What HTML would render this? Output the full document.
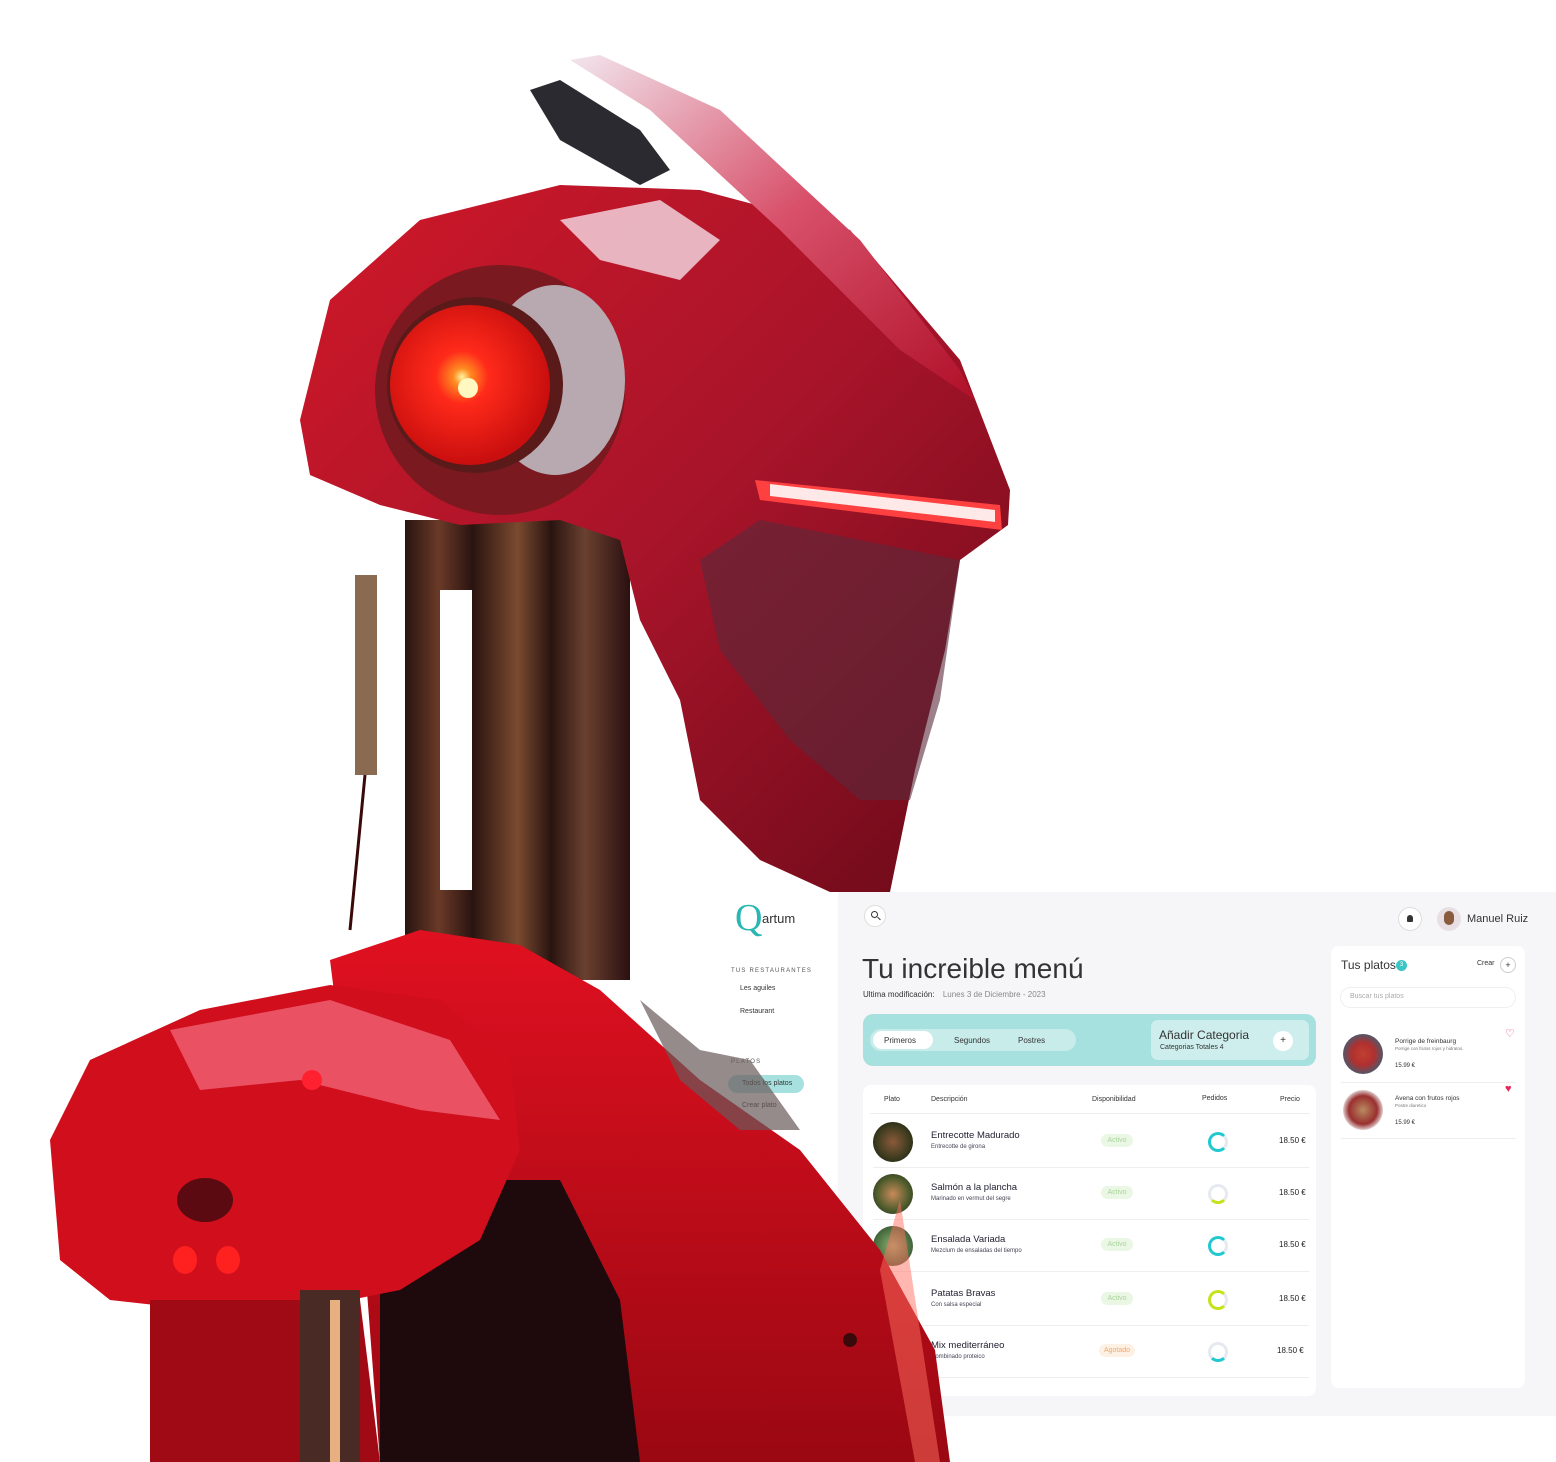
<!DOCTYPE html>
<html><head><meta charset="utf-8"><style>
*{margin:0;padding:0;box-sizing:border-box}
body{width:1556px;height:1462px;background:#fff;position:relative;overflow:hidden;font-family:"Liberation Sans",sans-serif;color:#333}
.a{position:absolute;white-space:nowrap}
.t{font-size:8px;color:#333}
.s{font-size:6px;color:#555}
.row{position:absolute;left:873px;width:436px;border-bottom:1px solid #eee;height:52px}
.dish{position:absolute;left:0;top:6px;width:40px;height:40px;border-radius:50%}
.badge{position:absolute;left:228px;top:18px;width:32px;height:13px;border-radius:7px;background:#eaf7e4;color:#a9d39a;font-size:7px;text-align:center;line-height:13px}
.ring{position:absolute;left:335px;top:16px;width:20px;height:20px;border-radius:50%;border:3px solid #e6e9ef}
.pr{position:absolute;left:406px;top:20px;font-size:8px;color:#222}
.nm{position:absolute;left:58px;top:14px;font-size:9.5px;color:#223}
.ds{position:absolute;left:58px;top:28px;font-size:6px;color:#445}
</style></head><body>
<div class="a" style="left:720px;top:892px;width:836px;height:524px;background:#f6f6f8"></div>
<div class="a" style="left:720px;top:892px;width:118px;height:524px;background:#fff"></div>
<div class="a" style="left:735px;top:896px;font-family:'Liberation Serif',serif;font-size:38px;color:#2ab7b3">Q</div>
<div class="a" style="left:762px;top:911px;font-size:13px;color:#333">artum</div>
<div class="a s" style="left:731px;top:968px;letter-spacing:1.2px">TUS RESTAURANTES</div>
<div class="a t" style="left:740px;top:985px;font-size:7px">Les aguiles</div>
<div class="a t" style="left:740px;top:1008px;font-size:7px">Restaurant</div>
<div class="a s" style="left:731px;top:1059px;letter-spacing:1.2px">PLATOS</div>
<div class="a" style="left:728px;top:1075px;width:76px;height:18px;border-radius:9px;background:#a7e1df"></div>
<div class="a t" style="left:742px;top:1080px;font-size:7px">Todos los platos</div>
<div class="a t" style="left:742px;top:1102px;font-size:7px">Crear plato</div>

<div class="a" style="left:864px;top:905px;width:22px;height:22px;border-radius:50%;border:1px solid #ddd;background:#fff"></div>
<div class="a" style="left:871px;top:911px;width:7px;height:7px;border-radius:50%;border:1px solid #333"></div>
<div class="a" style="left:877px;top:918px;width:4px;height:1px;background:#333;transform:rotate(45deg)"></div>
<div class="a" style="left:1398px;top:907px;width:24px;height:24px;border-radius:50%;border:1px solid #ddd;background:#fff"></div>
<div class="a" style="left:1407px;top:915px;width:6px;height:7px;background:#333;border-radius:3px 3px 1px 1px"></div>
<div class="a" style="left:1437px;top:907px;width:24px;height:24px;border-radius:50%;background:#e8dfe5"></div>
<div class="a" style="left:1444px;top:911px;width:10px;height:14px;border-radius:5px;background:#8a5a3c"></div>
<div class="a" style="left:1467px;top:913px;font-size:11px;color:#333">Manuel Ruiz</div>

<div class="a" style="left:862px;top:953px;font-size:28px;color:#333">Tu increible menú</div>
<div class="a t" style="left:863px;top:990px">Ultima modificación: <span style="color:#888;margin-left:6px">Lunes 3 de Diciembre - 2023</span></div>

<div class="a" style="left:863px;top:1014px;width:453px;height:52px;border-radius:10px;background:#a7e1df"></div>
<div class="a" style="left:870px;top:1029px;width:206px;height:22px;border-radius:11px;background:#c8ecea"></div>
<div class="a" style="left:873px;top:1031px;width:60px;height:18px;border-radius:9px;background:#fff"></div>
<div class="a t" style="left:884px;top:1036px">Primeros</div>
<div class="a t" style="left:954px;top:1036px">Segundos</div>
<div class="a t" style="left:1018px;top:1036px">Postres</div>
<div class="a" style="left:1151px;top:1020px;width:158px;height:40px;border-radius:7px;background:#cdeeec"></div>
<div class="a" style="left:1159px;top:1028px;font-size:12px;color:#333">Añadir Categoria</div>
<div class="a t" style="left:1160px;top:1044px;font-size:7px">Categorias Totales 4</div>
<div class="a" style="left:1273px;top:1031px;width:20px;height:20px;border-radius:50%;background:#fff;text-align:center;line-height:20px;font-size:10px">+</div>

<div class="a" style="left:863px;top:1085px;width:453px;height:311px;border-radius:8px;background:#fff"></div>
<div class="a t" style="left:884px;top:1096px;font-size:7px">Plato</div>
<div class="a t" style="left:931px;top:1096px;font-size:7px">Descripción</div>
<div class="a t" style="left:1092px;top:1096px;font-size:7px">Disponibilidad</div>
<div class="a t" style="left:1202px;top:1095px;font-size:7px">Pedidos</div>
<div class="a t" style="left:1280px;top:1096px;font-size:7px">Precio</div>
<div class="a" style="left:870px;top:1113px;width:440px;height:1px;background:#eee"></div>

<div class="row" style="top:1116px"><div class="dish" style="background:radial-gradient(#8a5a3a,#3b3a1e 60%,#111)"></div><div class="nm">Entrecotte Madurado</div><div class="ds">Entrecotte de girona</div><div class="badge">Activo</div><div class="ring" style="border-color:#20c9cf #e6e9ef #20c9cf #20c9cf"></div><div class="pr">18.50 €</div></div>
<div class="row" style="top:1168px"><div class="dish" style="background:radial-gradient(#c98a5a,#4a5a2a 60%,#222)"></div><div class="nm">Salmón a la plancha</div><div class="ds">Marinado en vermut del segre</div><div class="badge">Activo</div><div class="ring" style="border-bottom-color:#c6e21a"></div><div class="pr">18.50 €</div></div>
<div class="row" style="top:1220px"><div class="dish" style="background:radial-gradient(#8fb070,#4a7040 60%,#333)"></div><div class="nm">Ensalada Variada</div><div class="ds">Mezclum de ensaladas del tiempo</div><div class="badge">Activo</div><div class="ring" style="border-color:#20c9cf #e6e9ef #20c9cf #20c9cf"></div><div class="pr">18.50 €</div></div>
<div class="row" style="top:1274px"><div class="nm">Patatas Bravas</div><div class="ds">Con salsa especial</div><div class="badge">Activo</div><div class="ring" style="border-color:#c6e21a #e6e9ef #c6e21a #c6e21a"></div><div class="pr">18.50 €</div></div>
<div class="row" style="top:1326px"><div class="nm">Mix mediterráneo</div><div class="ds">Combinado proteico</div><div class="badge" style="background:#fdf0e4;color:#f4a86a;width:36px;left:226px">Agotado</div><div class="ring" style="border-bottom-color:#20c9cf"></div><div class="pr" style="left:404px">18.50 €</div></div>

<div class="a" style="left:1331px;top:946px;width:194px;height:442px;border-radius:8px;background:#fff"></div>
<div class="a" style="left:1341px;top:958px;font-size:12px;color:#333">Tus platos</div>
<div class="a" style="left:1396px;top:960px;width:11px;height:11px;border-radius:50%;background:#3cc6c3;color:#fff;font-size:6px;text-align:center;line-height:11px">3</div>
<div class="a t" style="left:1477px;top:960px;font-size:7px">Crear</div>
<div class="a" style="left:1500px;top:957px;width:16px;height:16px;border-radius:50%;border:1px solid #ccc;font-size:9px;text-align:center;line-height:14px">+</div>
<div class="a" style="left:1340px;top:987px;width:176px;height:21px;border-radius:11px;border:1px solid #eee"></div>
<div class="a" style="left:1350px;top:993px;font-size:7px;color:#aaa">Buscar tus platos</div>
<div class="a" style="left:1343px;top:1034px;width:40px;height:40px;border-radius:50%;background:radial-gradient(#c04030,#b03030 40%,#556 70%,#ddd)"></div>
<div class="a" style="left:1395px;top:1038px;font-size:6.5px;color:#333">Porrige de freinbaurg</div>
<div class="a" style="left:1395px;top:1046px;font-size:4.5px;color:#777">Porrige con frutos rojos y hidratos.</div>
<div class="a" style="left:1395px;top:1063px;font-size:6px">15.99 €</div>
<div class="a" style="left:1505px;top:1027px;font-size:11px;color:#e8457a">♡</div>
<div class="a" style="left:1341px;top:1082px;width:175px;height:1px;background:#eee"></div>
<div class="a" style="left:1343px;top:1090px;width:40px;height:40px;border-radius:50%;background:radial-gradient(#b88a60,#9a3030 50%,#eee 75%)"></div>
<div class="a" style="left:1395px;top:1095px;font-size:6.5px;color:#333">Avena con frutos rojos</div>
<div class="a" style="left:1395px;top:1103px;font-size:4.5px;color:#777">Postre diuretico</div>
<div class="a" style="left:1395px;top:1120px;font-size:6px">15.99 €</div>
<div class="a" style="left:1505px;top:1083px;font-size:11px;color:#e8245a">♥</div>
<div class="a" style="left:1341px;top:1138px;width:175px;height:1px;background:#eee"></div>

<svg class="a" style="left:0;top:0" width="1556" height="1462" viewBox="0 0 1556 1462">
<defs>
<radialGradient id="eye" cx="0.45" cy="0.45" r="0.55"><stop offset="0" stop-color="#fff6a0"/><stop offset="0.1" stop-color="#ff8a20"/><stop offset="0.3" stop-color="#ff2a1a"/><stop offset="1" stop-color="#c80e0e"/></radialGradient>
<linearGradient id="hel" x1="0" y1="0" x2="1" y2="1"><stop offset="0" stop-color="#d01828"/><stop offset="0.5" stop-color="#a8142a"/><stop offset="1" stop-color="#6a0a18"/></linearGradient>
<linearGradient id="fin" x1="0" y1="0" x2="1" y2="1"><stop offset="0" stop-color="#f2e6ee"/><stop offset="0.5" stop-color="#d8506a"/><stop offset="1" stop-color="#b01028"/></linearGradient>
<linearGradient id="sh" x1="0" y1="0" x2="0" y2="1"><stop offset="0" stop-color="#e01020"/><stop offset="1" stop-color="#9a0812"/></linearGradient>
<linearGradient id="neck" x1="0" y1="0" x2="1" y2="0"><stop offset="0" stop-color="#2a1410"/><stop offset="0.15" stop-color="#6a3a28"/><stop offset="0.3" stop-color="#2a1410"/><stop offset="0.5" stop-color="#7a4a30"/><stop offset="0.65" stop-color="#2a1410"/><stop offset="0.8" stop-color="#6a4030"/><stop offset="1" stop-color="#2a1010"/></linearGradient>
</defs>
<rect x="405" y="520" width="225" height="460" fill="url(#neck)"/>
<rect x="440" y="590" width="32" height="300" fill="#fff"/>
<rect x="355" y="575" width="22" height="200" fill="#8a6a50"/>
<path d="M365 775 L350 930" stroke="#3a0a0a" stroke-width="3"/>
<path d="M300 420 L330 300 L420 220 L560 185 L700 190 L850 230 L960 360 L1010 490 L1008 525 L960 560 L945 650 L915 770 L890 892 L830 892 L760 860 L700 800 L680 700 L640 620 L620 540 L560 520 L460 525 L380 505 L310 475 Z" fill="url(#hel)"/>
<path d="M700 560 L760 520 L960 560 L940 700 L910 800 L860 800 L790 740 L720 650 Z" fill="#5a2a3a" opacity="0.6"/>
<path d="M570 60 L600 55 L720 110 L860 240 L960 370 L975 400 L900 350 L780 230 L650 110 Z" fill="url(#fin)"/>
<path d="M530 90 L560 80 L640 130 L670 170 L640 185 L560 140 Z" fill="#2a2a30"/>
<path d="M560 220 L660 200 L720 240 L680 280 L600 260 Z" fill="#f4dce6" opacity="0.8"/>
<circle cx="500" cy="390" r="125" fill="#7a1a20"/>
<ellipse cx="555" cy="380" rx="70" ry="95" fill="#b8a8b0"/>
<circle cx="475" cy="385" r="88" fill="#5a1a1a"/>
<circle cx="470" cy="385" r="80" fill="url(#eye)"/>
<circle cx="468" cy="388" r="10" fill="#fff8c0"/>
<path d="M755 480 L1000 505 L1002 530 L760 500 Z" fill="#ff4040"/>
<path d="M770 484 L995 510 L995 522 L770 496 Z" fill="#ffe8e8"/>
<path d="M330 960 L420 930 L520 945 L600 990 L700 1080 L800 1150 L880 1250 L935 1350 L950 1462 L380 1462 L360 1200 Z" fill="url(#sh)"/>
<path d="M640 1000 L700 1050 L750 1060 L800 1130 L740 1130 L680 1080 Z" fill="#6a5a5a" opacity="0.7"/>
<path d="M380 1180 L560 1180 L620 1300 L640 1462 L380 1462 Z" fill="#1e0a0c"/>
<path d="M50 1140 L90 1060 L200 1010 L330 985 L440 1000 L510 1060 L520 1150 L480 1240 L400 1290 L300 1310 L200 1310 L110 1300 L60 1260 Z" fill="#d00e1c"/>
<path d="M170 1030 L330 1000 L450 1040 L500 1120 L420 1110 L300 1080 L200 1090 Z" fill="#ff8aa0" opacity="0.55"/>
<circle cx="312" cy="1080" r="10" fill="#ff2030"/>
<ellipse cx="205" cy="1200" rx="28" ry="22" fill="#5a0a10"/>
<ellipse cx="185" cy="1260" rx="12" ry="14" fill="#ff2020"/>
<ellipse cx="228" cy="1260" rx="12" ry="14" fill="#ff2020"/>
<path d="M150 1300 L360 1300 L380 1462 L150 1462 Z" fill="#a00a14"/>
<rect x="300" y="1290" width="60" height="172" fill="#4a2a24"/>
<rect x="330" y="1300" width="10" height="162" fill="#e8b080"/>
<circle cx="850" cy="1340" r="7" fill="#3a0a0a"/>
<path d="M900 1200 L940 1462 L915 1462 L880 1270 Z" fill="#ff7060" opacity="0.5"/>
</svg>
</body></html>
